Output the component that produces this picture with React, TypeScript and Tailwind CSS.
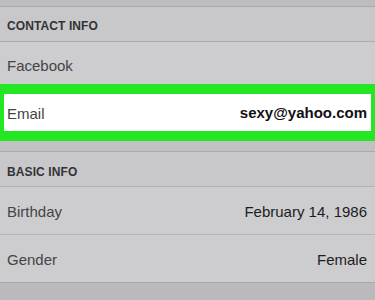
import React from "react";

export default function App() {
  const font = { fontFamily: '"Liberation Sans", Arial, sans-serif' };
  return (
    <div className="w-[375px] h-[300px] overflow-hidden bg-[#bcbcbe] flex flex-col" style={font}>
      <div className="h-[7px] shrink-0 bg-[#bdbdbf] border-b border-[#a9a9ab]" />
      <div className="h-[35px] shrink-0 bg-[#c8c8ca] border-b border-[#acacae] pl-[7px] pt-[13px]">
        <div className="text-[12px] leading-none font-bold text-[#333336] tracking-[0.1px]">CONTACT INFO</div>
      </div>
      <div className="h-[42px] shrink-0 bg-[#cdcdcf] pl-[7px] pt-[16px]">
        <div className="text-[15px] leading-none text-[#444446]">Facebook</div>
      </div>
      <div className="h-[57px] shrink-0 bg-[#22e722] px-[4px] py-[10px]">
        <div className="h-full bg-white flex items-start justify-between pl-[3px] pr-[4px]">
          <div className="text-[15px] leading-none text-[#444446] pt-[12px]">Email</div>
          <div className="text-[15px] leading-none font-bold text-[#111] pt-[11px]">sexy@yahoo.com</div>
        </div>
      </div>
      <div className="h-[11px] shrink-0 bg-[#c1c1c3] border-b border-[#aaaaac]" />
      <div className="h-[35px] shrink-0 bg-[#c8c8ca] border-b border-[#b3b3b5] pl-[7px] pt-[14px]">
        <div className="text-[12px] leading-none font-bold text-[#333336] tracking-[0.1px]">BASIC INFO</div>
      </div>
      <div className="h-[48px] shrink-0 bg-[#cdcdcf] border-b border-[#b5b5b7] flex items-start justify-between pl-[7px] pr-[8px] pt-[17px]">
        <div className="text-[15px] leading-none text-[#444446]">Birthday</div>
        <div className="text-[15px] leading-none text-[#1c1c1e]">February 14, 1986</div>
      </div>
      <div className="h-[48px] shrink-0 bg-[#cdcdcf] border-b border-[#a9a9ab] flex items-start justify-between pl-[7px] pr-[8px] pt-[17px]">
        <div className="text-[15px] leading-none text-[#444446]">Gender</div>
        <div className="text-[15px] leading-none text-[#1c1c1e]">Female</div>
      </div>
      <div className="flex-1 bg-[#bababc]" />
    </div>
  );
}
